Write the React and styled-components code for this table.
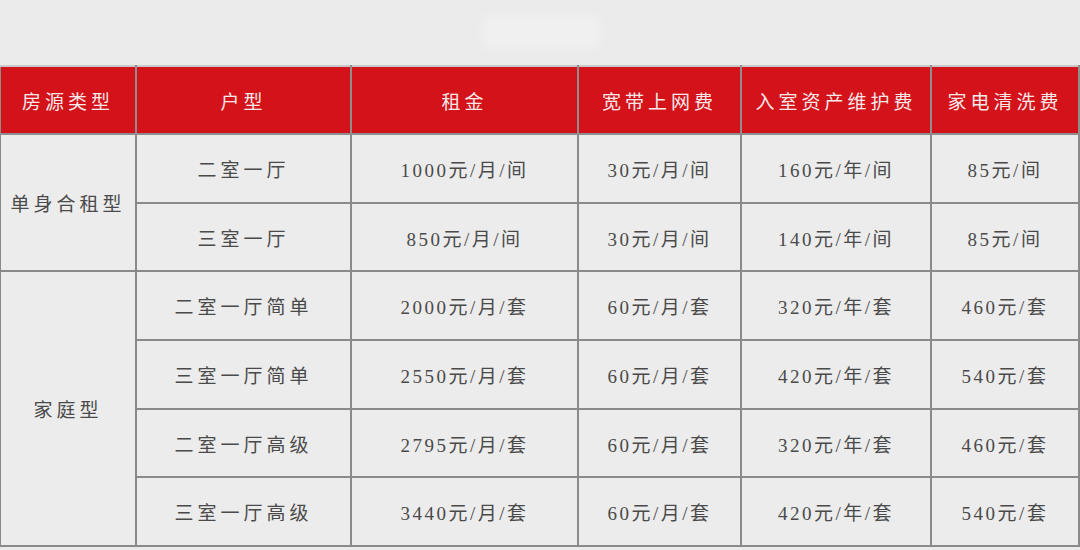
import React from "react";
import styled, { createGlobalStyle } from "styled-components";

const GlobalStyle = createGlobalStyle`
  html, body {
    margin: 0;
    padding: 0;
    background: #ebebeb;
  }
`;

const Page = styled.div`
  width: 1080px;
  height: 550px;
  overflow: hidden;
  background: #ebebeb;
  font-family: "Liberation Serif", "Noto Sans CJK SC", serif;
`;

const Top = styled.div`
  height: 65px;
  display: flex;
  justify-content: center;
  align-items: flex-start;
  padding-top: 16px;
  box-sizing: border-box;
`;

const Watermark = styled.div`
  width: 118px;
  height: 32px;
  margin-left: 2px;
  background: #f0f0f0;
  border-radius: 4px;
  filter: blur(4px);
`;

const Table = styled.table`
  border-collapse: collapse;
  table-layout: fixed;
  width: 1079px;
  margin-left: -1px;
`;

const HeadCell = styled.th`
  height: 66px;
  padding: 0;
  background: #d3121a;
  color: #f7e8e8;
  font-weight: normal;
  font-size: 19px;
  letter-spacing: 4px;
  text-align: center;
  border: 2px solid #8e8e8e;
  border-top: 2px solid #c9c9c9;
`;

const Cell = styled.td`
  height: 66.7px;
  padding: 0;
  background: #ececec;
  color: #4a4a4a;
  font-size: 19px;
  letter-spacing: ${(p) => (p.$wide ? "4px" : "2.5px")};
  text-align: center;
  border: 2px solid #8a8a8a;
`;

const headers = ["房源类型", "户型", "租金", "宽带上网费", "入室资产维护费", "家电清洗费"];
const widths = [136, 215, 227, 163, 190, 148];

const groups = [
  {
    type: "单身合租型",
    rows: [
      ["二室一厅", "1000元/月/间", "30元/月/间", "160元/年/间", "85元/间"],
      ["三室一厅", "850元/月/间", "30元/月/间", "140元/年/间", "85元/间"],
    ],
  },
  {
    type: "家庭型",
    rows: [
      ["二室一厅简单", "2000元/月/套", "60元/月/套", "320元/年/套", "460元/套"],
      ["三室一厅简单", "2550元/月/套", "60元/月/套", "420元/年/套", "540元/套"],
      ["二室一厅高级", "2795元/月/套", "60元/月/套", "320元/年/套", "460元/套"],
      ["三室一厅高级", "3440元/月/套", "60元/月/套", "420元/年/套", "540元/套"],
    ],
  },
];

export default function App() {
  return (
    <Page>
      <GlobalStyle />
      <Top>
        <Watermark />
      </Top>
      <Table>
        <colgroup>
          {widths.map((w, i) => (
            <col key={i} style={{ width: w }} />
          ))}
        </colgroup>
        <thead>
          <tr>
            {headers.map((h) => (
              <HeadCell key={h}>{h}</HeadCell>
            ))}
          </tr>
        </thead>
        <tbody>
          {groups.map((g) =>
            g.rows.map((r, i) => (
              <tr key={g.type + i}>
                {i === 0 && (
                  <Cell $wide rowSpan={g.rows.length}>
                    {g.type}
                  </Cell>
                )}
                {r.map((v, j) => (
                  <Cell key={j} $wide={j === 0}>
                    {v}
                  </Cell>
                ))}
              </tr>
            ))
          )}
        </tbody>
      </Table>
    </Page>
  );
}
